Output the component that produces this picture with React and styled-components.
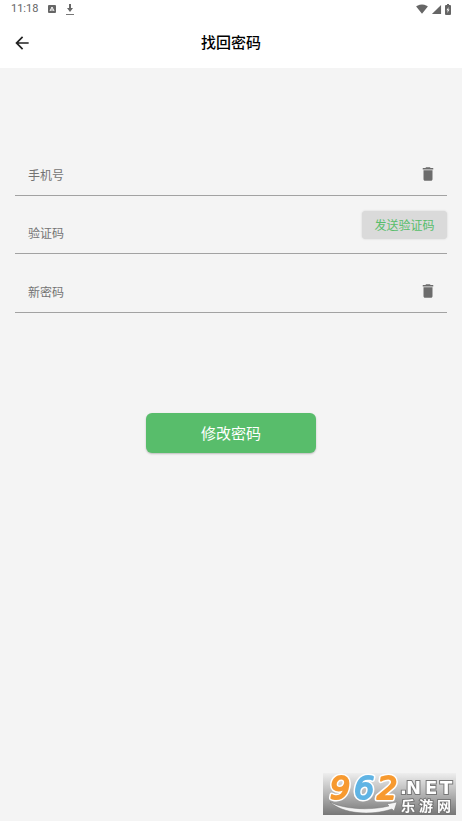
import React from 'react';
import styled, { createGlobalStyle } from 'styled-components';
import { MdArrowBack, MdDelete, MdSignalWifi4Bar, MdSignalCellular4Bar } from 'react-icons/md';

const GlobalStyle = createGlobalStyle`
  * { box-sizing: border-box; }
  body { margin: 0; background: #f4f4f4; }
  body, button, input { font-family: Roboto, "Noto Sans CJK SC", sans-serif; }
`;

const Page = styled.div`
  min-height: 100vh;
  display: flex;
  flex-direction: column;
  background: #f4f4f4;
`;

const StatusBar = styled.div`
  height: 18px;
  padding: 0 11px;
  display: flex;
  align-items: center;
  justify-content: space-between;
  background: #fff;
  color: #666;
`;

const StatusGroup = styled.div`
  display: flex;
  align-items: center;
  gap: ${({ $gap }) => $gap}px;
  svg { display: block; }
`;

const Clock = styled.time`
  font-size: 11px;
  line-height: 20px;
`;

const AppBar = styled.header`
  height: 50px;
  padding: 0 12px;
  display: grid;
  grid-template-columns: 20px 1fr 20px;
  align-items: center;
  background: #fff;
`;

const BackButton = styled.button`
  display: flex;
  padding: 0;
  border: 0;
  background: none;
  color: #222;
`;

const Title = styled.h1`
  margin: 0;
  text-align: center;
  font-size: 15px;
  line-height: 24px;
  font-weight: 500;
  color: #000;
`;

const Form = styled.form`
  padding: 70px 15px 0;
  display: flex;
  flex-direction: column;
`;

const FieldRow = styled.div`
  height: ${({ $tall }) => ($tall ? 59 : 58)}px;
  padding: 0 ${({ $action }) => ($action ? 0 : 10)}px 0 13px;
  display: flex;
  align-items: ${({ $action }) => ($action ? 'flex-start' : 'flex-end')};
  border-bottom: 1px solid #a2a2a2;
`;

const FieldInput = styled.input`
  flex: 1;
  min-width: 0;
  align-self: flex-end;
  height: 38px;
  padding: 0;
  border: 0;
  outline: 0;
  background: transparent;
  font-size: 12px;
  color: #333;
  &::placeholder { color: #737373; opacity: 1; }
`;

const ClearButton = styled.button`
  height: 42px;
  padding: 0;
  display: flex;
  align-items: center;
  border: 0;
  background: none;
  color: #6c6c6c;
`;

const SendButton = styled.button`
  width: 85px;
  height: 28px;
  margin-top: 15px;
  padding: 0 0 2px;
  border: 0;
  border-radius: 4px;
  background: #dadada;
  box-shadow: 0 0 2px #ccc;
  color: #58bd6b;
  font-size: 12px;
`;

const SubmitButton = styled.button`
  align-self: center;
  width: 170px;
  height: 40px;
  margin-top: 100px;
  padding: 0 0 2px;
  border: 0;
  border-radius: 6px;
  background: #58bd6b;
  box-shadow: 0 1px 2px #bbb;
  color: #fff;
  font-size: 15px;
`;

const Watermark = styled.svg`
  position: fixed;
  right: 6px;
  bottom: 6px;
  width: 133px;
  height: 42px;
  overflow: visible;
`;

function AppBadgeIcon() {
  return (
    <svg width="8" height="8" viewBox="0 0 8 8" aria-hidden="true">
      <rect width="8" height="8" rx="1" fill="#666" />
      <path d="M2 6 4 2 6 6M3 5h2" fill="none" stroke="#fff" strokeWidth="1" />
    </svg>
  );
}

function DownloadIcon() {
  return (
    <svg width="8" height="11" viewBox="0 0 8 11" aria-hidden="true">
      <path d="M4 0v6" stroke="#666" strokeWidth="2" />
      <path d="M1 4h6L4 8z" fill="#666" />
      <path d="M0 10.5h8" stroke="#777" strokeWidth="1" />
    </svg>
  );
}

function BatteryIcon() {
  return (
    <svg width="6" height="11" viewBox="0 0 6 11" aria-hidden="true">
      <path d="M2 0h2v1h1q1 0 1 1v8q0 1-1 1H1q-1 0-1-1V2q0-1 1-1h1z" fill="#666" />
      <path d="M3.7 3 1.5 6.3h1.3L2.3 9l2.2-3.5H3.2z" fill="#fff" />
    </svg>
  );
}

function SiteMark() {
  return (
    <Watermark viewBox="0 0 133 42" role="img" aria-label="962.NET 乐游网">
      <defs>
        <linearGradient id="plate" x2="0" y2="1">
          <stop stopColor="#eeeeee" />
          <stop offset="0.5" stopColor="#b4b4b4" />
          <stop offset="1" stopColor="#777777" />
        </linearGradient>
      </defs>
      <rect width="133" height="42" fill="url(#plate)" />
      <path d="M7 29C20 36 46 38 66 33L64 31L74 29L71 38L69 36C48 43 20 41 7 29Z" fill="#f4f4f4" stroke="#777" strokeWidth="0.5" />
      <g fontFamily="DejaVu Sans, sans-serif" fontStyle="italic" fontSize="32" strokeLinejoin="round">
        <g fill="none" stroke="#fff" strokeWidth="5">
          <text x="7" y="26">9</text>
          <text x="31" y="26">6</text>
          <text x="54" y="26">2</text>
        </g>
        <g strokeWidth="2">
          <text x="7" y="26" fill="#f79a30" stroke="#f79a30">9</text>
          <text x="31" y="26" fill="#60b4e4" stroke="#60b4e4">6</text>
          <text x="54" y="26" fill="#f79a30" stroke="#f79a30">2</text>
        </g>
      </g>
      <g fill="#fff" stroke="#777" strokeWidth="2" paintOrder="stroke" fontWeight="700">
        <text y="21" fontFamily="DejaVu Sans, sans-serif" fontSize="18">
          <tspan x="77">.</tspan><tspan x="83">N</tspan><tspan x="102">E</tspan><tspan x="117">T</tspan>
        </text>
        <text y="38" fontFamily="Noto Sans CJK SC, sans-serif" fontSize="14">
          <tspan x="78">乐</tspan><tspan x="96">游</tspan><tspan x="114">网</tspan>
        </text>
      </g>
    </Watermark>
  );
}

function ClearableField({ name, label, type, tall }) {
  return (
    <FieldRow $tall={tall}>
      <FieldInput name={name} type={type} placeholder={label} aria-label={label} />
      <ClearButton type="button" aria-label={`清空${label}`}><MdDelete size={18} /></ClearButton>
    </FieldRow>
  );
}

export default function App() {
  return (
    <Page>
      <GlobalStyle />
      <StatusBar>
        <StatusGroup $gap={10}>
          <Clock>11:18</Clock>
          <AppBadgeIcon />
          <DownloadIcon />
        </StatusGroup>
        <StatusGroup $gap={3}>
          <MdSignalWifi4Bar size={12} />
          <MdSignalCellular4Bar size={11} />
          <BatteryIcon />
        </StatusGroup>
      </StatusBar>
      <AppBar>
        <BackButton type="button" aria-label="返回"><MdArrowBack size={20} /></BackButton>
        <Title>找回密码</Title>
      </AppBar>
      <Form onSubmit={(event) => event.preventDefault()}>
        <ClearableField name="phone" type="tel" label="手机号" />
        <FieldRow $action>
          <FieldInput name="code" type="text" placeholder="验证码" aria-label="验证码" />
          <SendButton type="button">发送验证码</SendButton>
        </FieldRow>
        <ClearableField name="password" type="password" label="新密码" tall />
        <SubmitButton type="submit">修改密码</SubmitButton>
      </Form>
      <SiteMark />
    </Page>
  );
}
